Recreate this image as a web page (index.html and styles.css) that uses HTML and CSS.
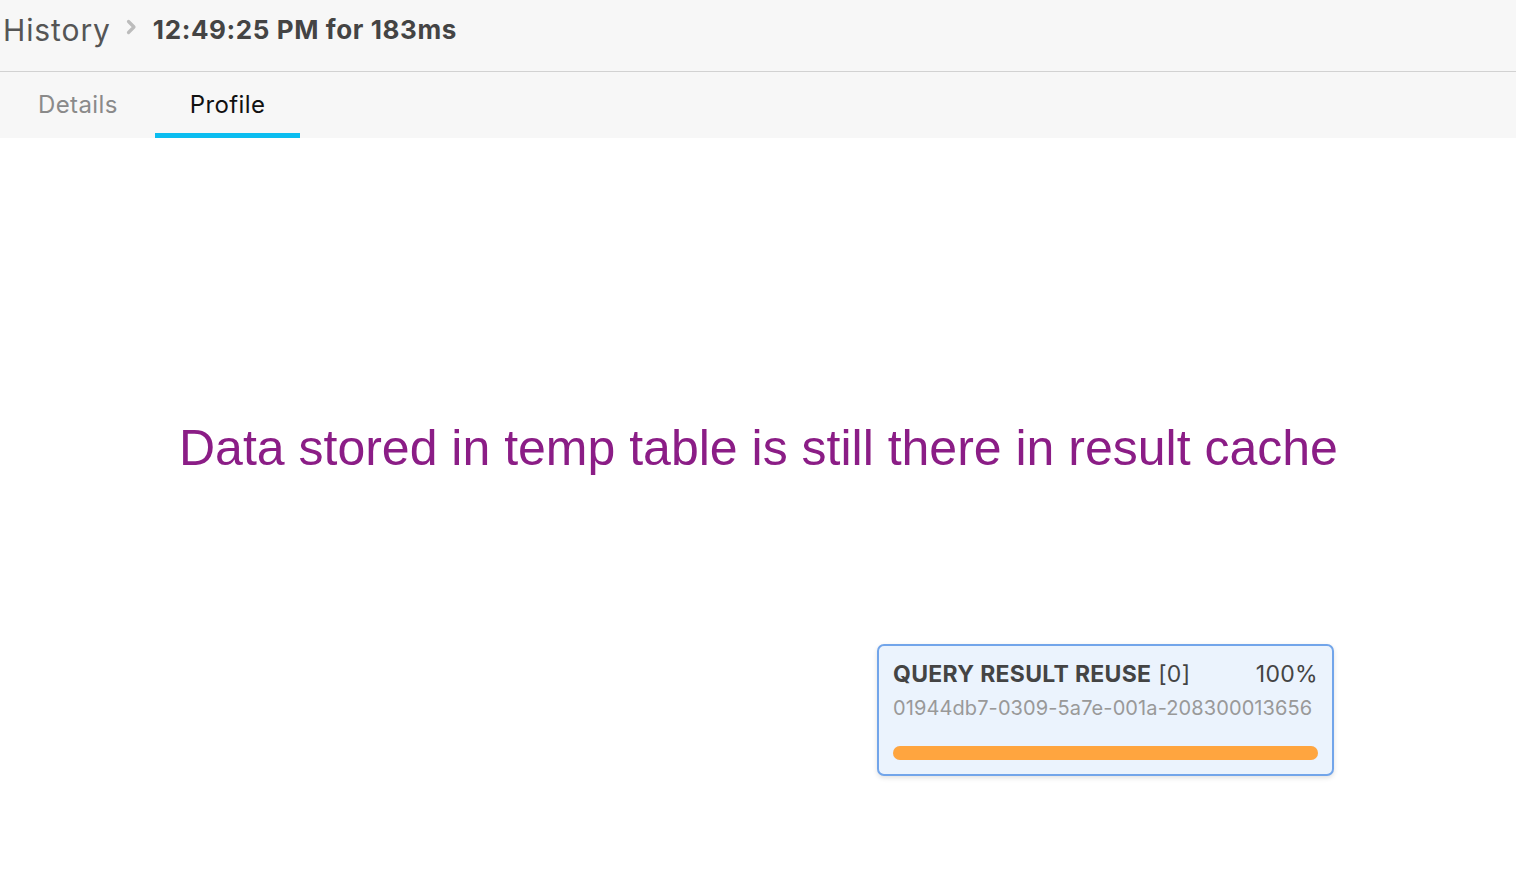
FILE: index.html
```html
<!DOCTYPE html>
<html>
<head>
<meta charset="utf-8">
<link rel="stylesheet" href="styles.css">
</head>
<body>
<div class="page">
  <header class="topbar">
    <span class="crumb">History</span>
    <svg class="chev" width="11" height="16" viewBox="0 0 11 16"><path d="M2.5 2.5 L8 8 L2.5 13.5" fill="none" stroke="#bcbcbc" stroke-width="3.2" stroke-linecap="round" stroke-linejoin="round"/></svg>
    <span class="title">12:49:25 PM for 183ms</span>
  </header>
  <nav class="tabs">
    <div class="tab">Details</div>
    <div class="tab active">Profile</div>
  </nav>
  <main class="canvas">
    <div class="note">Data stored in temp table is still there in result cache</div>
    <div class="node">
      <div class="node-head">
        <span class="node-name"><b>QUERY RESULT REUSE</b> [0]</span>
        <span class="node-pct">100%</span>
      </div>
      <div class="node-id">01944db7-0309-5a7e-001a-208300013656</div>
      <div class="node-bar"><div class="node-fill" style="width:100%"></div></div>
    </div>
  </main>
</div>
</body>
</html>
```

FILE: styles.css
```css
* { box-sizing: border-box; }
html, body { margin: 0; padding: 0; background: #fff; }
body { font-family: Inter, "Noto Sans", sans-serif; width: 1516px; height: 892px; overflow: hidden; }
.page { display: flex; flex-direction: column; height: 892px; }
.topbar {
  height: 72px;
  background: #f7f7f7;
  border-bottom: 1px solid #d2d2d2;
  display: flex;
  align-items: center;
  padding: 0 0 12px 3px;
}
.crumb { font-size: 30px; color: #555; letter-spacing: 0.9px; }
.chev { margin: 0 16px 6px 15px; }
.title { font-size: 26px; font-weight: 700; color: #444; letter-spacing: 0.6px; }
.tabs {
  height: 66px;
  background: #f7f7f7;
  display: flex;
  padding-left: 20px;
}
.tab {
  font-size: 24px;
  color: #8a8a8a;
  padding: 18px 0 0;
  width: 135px;
  text-align: center;
  letter-spacing: 0.4px;
  border-bottom: 5px solid transparent;
}
.tab:first-child { text-align: left; padding-left: 18px; }
.tab.active { color: #111; border-bottom-color: #0bbdf0; width: 145px; }
.canvas { position: relative; flex: 1; background: #fff; }
.note {
  position: absolute;
  left: 179px;
  top: 281px;
  font-family: "Liberation Sans", Arial, sans-serif;
  font-size: 50px;
  color: #8b1d86;
  white-space: nowrap;
}
.node {
  position: absolute;
  left: 877px;
  top: 506px;
  width: 457px;
  height: 132px;
  background: #ebf3fd;
  border: 2px solid #72a5ea;
  border-radius: 7px;
  box-shadow: 0 2px 5px rgba(0,0,0,0.12);
  padding: 14px 14px 0 14px;
  display: flex;
  flex-direction: column;
}
.node-head { display: flex; justify-content: space-between; font-size: 23px; color: #444; letter-spacing: 0.3px; }
.node-name b { font-weight: 700; }
.node-id { font-size: 20px; color: #999; margin-top: 8px; letter-spacing: 0.1px; }
.node-bar { margin-top: 26px; height: 14px; border-radius: 7px; background: #dde6f3; }
.node-fill { height: 14px; border-radius: 7px; background: #ffa53f; }
```
